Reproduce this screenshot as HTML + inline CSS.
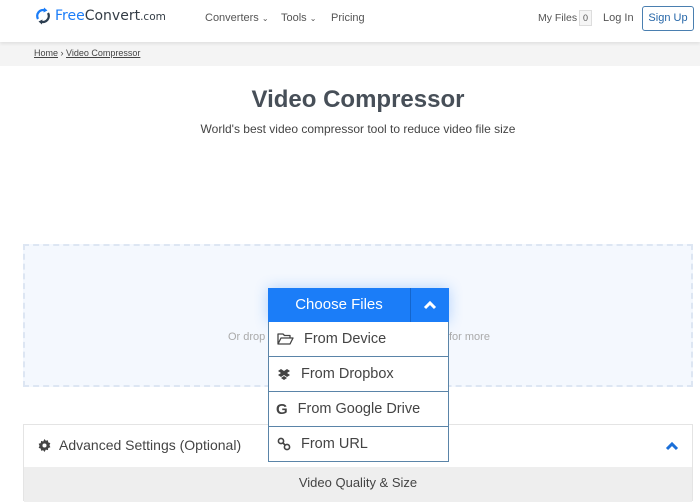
<!DOCTYPE html>
<html><head><meta charset="utf-8"><style>
*{box-sizing:border-box;margin:0;padding:0}
body{width:700px;height:501px;overflow:hidden;background:#fff;font-family:"Liberation Sans",Arial,sans-serif;position:relative;color:#4a4a4a}
.hdr{position:absolute;left:0;top:0;width:700px;height:42px;background:#fff;box-shadow:0 2px 3px rgba(0,0,0,.08);z-index:2}
.abs{position:absolute;white-space:nowrap}
.bc{position:absolute;top:42px;left:0;width:700px;height:24px;background:#f4f4f4}
.drop{position:absolute;left:23px;top:244px;width:670px;height:143px;background:#f4f8fe;border:2px dashed #dde6f3}
.menu{position:absolute;left:268px;top:288px;width:181px;z-index:3}
.btn{height:34px;background:#1b7df8;color:#fff;font-size:15px;display:flex;box-shadow:0 0 14px rgba(27,125,248,.3)}
.btn .a{width:143px;text-align:center;line-height:34px;border-right:1px solid #1465cc}
.btn .b{flex:1;display:flex;align-items:center;justify-content:center}
.it{height:35px;background:#fff;border:1px solid #5a84a8;border-top:none;display:flex;align-items:center;font-size:14.5px;color:#444}
.it svg{margin-left:8px;margin-right:10px}
.adv{position:absolute;left:23px;top:424px;width:670px;height:77px;border:1px solid #e4e4e4;background:#fff}
.gray{position:absolute;left:0;top:42px;width:668px;height:35px;background:#eeeeee;text-align:center;font-size:13px;line-height:32px;color:#444}
</style></head><body>
<div class="hdr">
 <svg class="abs" style="left:35px;top:7px" width="16" height="18" viewBox="0 0 16 18"><path d="M3 12A6 6 0 0 1 10 3.3" fill="none" stroke="#1b7df8" stroke-width="2.3"/><path d="M9 0.5l3.5 3-4 2z" fill="#1b7df8"/><path d="M13 6A6 6 0 0 1 6 14.7" fill="none" stroke="#2c3e50" stroke-width="2.3"/><path d="M7 17.5l-3.5-3 4-2z" fill="#2c3e50"/></svg>
 <div class="abs" style="left:55px;top:8px;font-size:14px;color:#1b7df8;font-family:'DejaVu Sans',sans-serif">Free<span style="color:#333c45">Convert</span><span style="color:#333c45;font-size:10.5px">.com</span></div>
 <div class="abs" style="left:205px;top:12px;font-size:11px;color:#555">Converters <span style="font-size:8px">⌄</span></div>
 <div class="abs" style="left:281px;top:12px;font-size:11px;color:#555">Tools <span style="font-size:8px">⌄</span></div>
 <div class="abs" style="left:331px;top:12px;font-size:11px;color:#555">Pricing</div>
 <div class="abs" style="left:538px;top:12px;font-size:10.5px;color:#555">My Files</div>
 <div class="abs" style="left:579px;top:10px;width:13px;height:16px;border:1px solid #ddd;background:#f5f5f5;font-size:9px;text-align:center;line-height:14px;color:#555">0</div>
 <div class="abs" style="left:603px;top:12px;font-size:11px;color:#555">Log In</div>
 <div class="abs" style="left:642px;top:6px;width:52px;height:25px;border:1px solid #4a7fb0;border-radius:3px;font-size:11px;color:#2566a8;text-align:center;line-height:23px">Sign Up</div>
</div>
<div class="bc"><div class="abs" style="left:34px;top:6px;font-size:9px;color:#444"><u>Home</u> › <u>Video Compressor</u></div></div>
<div class="abs" style="left:0;width:716px;top:86px;text-align:center;font-size:24px;font-weight:bold;color:#474f58">Video Compressor</div>
<div class="abs" style="left:0;width:716px;top:122px;text-align:center;font-size:12px;color:#444">World's best video compressor tool to reduce video file size</div>
<div class="drop"></div>
<div class="abs" style="left:228px;top:331px;font-size:11px;color:#aaa">Or drop</div>
<div class="abs" style="left:449px;top:331px;font-size:11px;color:#aaa">for more</div>
<div class="menu">
 <div class="btn"><div class="a">Choose Files</div><div class="b"><svg width="14" height="10" viewBox="0 0 14 10"><path d="M2 8l5-5 5 5" fill="none" stroke="#fff" stroke-width="3"/></svg></div></div>
 <div class="it"><svg width="17" height="14" viewBox="0 0 17 14"><path d="M1 12V2h5l1.5 1.5H13V6M1 12l3-6h12l-3 6z" fill="none" stroke="#444" stroke-width="1.3" stroke-linejoin="round"/></svg>From Device</div>
 <div class="it"><svg width="14" height="13" viewBox="0 0 14 13"><path d="M4 1L1 3l3 2-3 2 3 2 3-2 3 2 3-2-3-2 3-2-3-2-3 2zM4 10l3 2 3-2-3-2z" fill="#444"/></svg>From Dropbox</div>
 <div class="it"><span style="font-weight:bold;font-size:15px;margin:0 10px 0 7px;color:#444">G</span>From Google Drive</div>
 <div class="it"><svg width="14" height="14" viewBox="0 0 14 14"><circle cx="4" cy="4" r="2.6" fill="none" stroke="#444" stroke-width="1.6"/><circle cx="10" cy="10" r="2.6" fill="none" stroke="#444" stroke-width="1.6"/><path d="M6 6l2 2" stroke="#444" stroke-width="1.6"/></svg>From URL</div>
</div>
<div class="adv">
 <svg class="abs" style="left:14px;top:14px" width="13" height="13" viewBox="0 0 16 16"><path d="M8 0l1.6 2.2 2.6-.7.4 2.7 2.6.9-1.1 2.5 1.1 2.5-2.6.9-.4 2.7-2.6-.7L8 16l-1.6-2.2-2.6.7-.4-2.7L.8 10.9 1.9 8.4.8 5.9l2.6-.9.4-2.7 2.6.7z" fill="#444"/><circle cx="8" cy="8" r="2.5" fill="#fff"/></svg>
 <div class="abs" style="left:35px;top:12px;font-size:14px;color:#444">Advanced Settings (Optional)</div>
 <svg class="abs" style="left:641px;top:16px" width="14" height="10" viewBox="0 0 14 10"><path d="M2 8l5-5 5 5" fill="none" stroke="#1b6fd8" stroke-width="3"/></svg>
 <div class="gray">Video Quality &amp; Size</div>
</div>
</body></html>
